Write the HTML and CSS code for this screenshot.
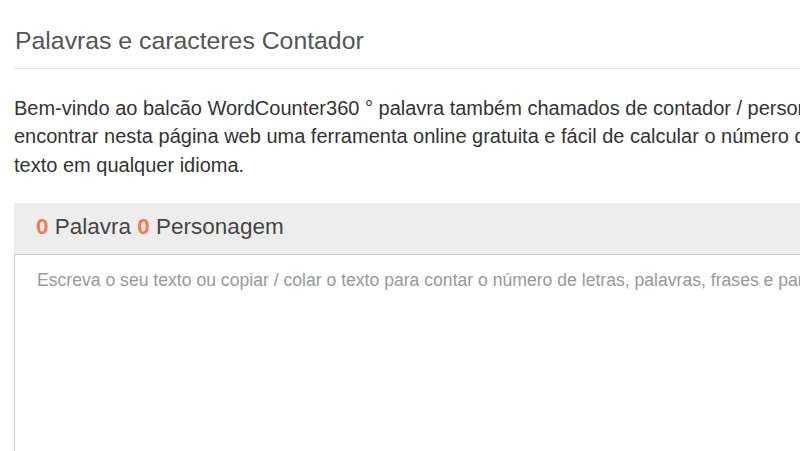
FILE: index.html
```html
<!DOCTYPE html>
<html lang="pt">
<head>
<meta charset="utf-8">
<title>Palavras e caracteres Contador</title>
<link rel="stylesheet" href="styles.css">
</head>
<body>
<main class="page">
  <h1 class="page-title">Palavras e caracteres Contador</h1>
  <p class="intro">Bem-vindo ao balcão WordCounter360 ° palavra também chamados de contador / personagem. Você vai encontrar nesta página web uma ferramenta online gratuita e fácil de calcular o número de palavras do seu texto em qualquer idioma.</p>
  <section class="counter">
    <div class="counter-head">
      <span class="num">0</span> Palavra <span class="num">0</span> Personagem
    </div>
    <textarea class="counter-input" placeholder="Escreva o seu texto ou copiar / colar o texto para contar o número de letras, palavras, frases e parágrafos."></textarea>
  </section>
</main>
</body>
</html>
```
FILE: styles.css
```css
html, body {
  margin: 0;
  overflow: hidden;
  background: #fff;
}

body {
  font-family: "Liberation Sans", Arial, sans-serif;
  color: #333;
}

.page {
  width: 986px;
  padding-left: 14px;
}

.page-title {
  margin: 27px 0 0;
  padding: 0 0 13px 1px;
  font-size: 24.8px;
  line-height: 28px;
  font-weight: normal;
  color: #555;
  border-bottom: 1px solid #e5e5e5;
}

.intro {
  max-width: 950px;
  margin: 25px 0 0;
  font-size: 20px;
  line-height: 28.3px;
  color: #333;
}

.counter {
  margin-top: 24px;
  display: flex;
  flex-direction: column;
}

.counter-head {
  background: #ededed;
  border-bottom: 1px solid #cccccc;
  padding: 12px 22px 15px;
  font-size: 22.5px;
  line-height: 24px;
  color: #454545;
}

.num {
  color: #f47c50;
  font-weight: bold;
}

.counter-input {
  box-sizing: border-box;
  height: 320px;
  margin: 0;
  padding: 13px 22px;
  border: 1px solid #cccccc;
  border-top: 0;
  font-family: "Liberation Sans", Arial, sans-serif;
  font-size: 17.6px;
  line-height: 24px;
  color: #333;
  resize: none;
  outline: none;
}

.counter-input::placeholder {
  color: #999;
}
```
